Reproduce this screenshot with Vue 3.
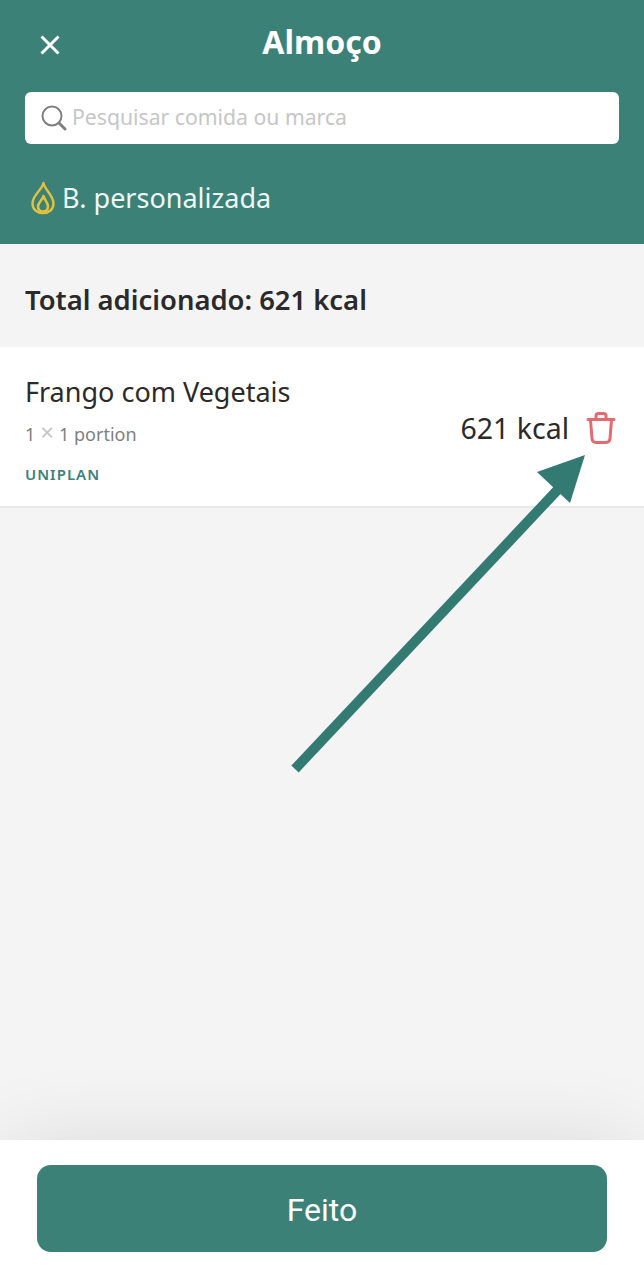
<script setup>
  const item = { name: 'Frango com Vegetais', kcal: 621, brand: 'UNIPLAN' };
</script>

<template>
  <div class="screen">
    <header class="header">
      <div class="title-row">
        <svg class="close" width="24" height="24" viewBox="0 0 24 24">
          <path d="M3.500 3.500 L20.500 20.500 M20.500 3.500 L3.500 20.500" stroke="#fff" stroke-width="3" fill="none" />
        </svg>
        <h1 class="title">Almoço</h1>
      </div>
      <div class="search">
        <svg class="search-icon" width="26" height="26" viewBox="0 0 26 26">
          <circle cx="11" cy="11" r="9.500" stroke="#808080" stroke-width="2" fill="none" />
          <path d="M18 18 L24 24" stroke="#808080" stroke-width="3" stroke-linecap="round" />
        </svg>
        <span class="placeholder">Pesquisar comida ou marca</span>
      </div>
      <div class="budget">
        <svg class="flame" width="24" height="34" viewBox="0 0 24 34">
          <path d="M12.500 2 C13 8 22.500 14 22.500 22.500 C22.500 28.500 18 32 12 32 C6 32 1.500 28.500 1.500 22.500 C1.500 14 11 9 12.500 2 Z" stroke="#e3c13f" stroke-width="2.400" fill="none" stroke-linejoin="round" />
          <path d="M12.500 15 C13.500 19 17 21.500 17 25.500 C17 28.500 15 30.500 12 30.500 C9 30.500 7 28.500 7 25.500 C7 21.500 11.500 19 12.500 15 Z" stroke="#e3c13f" stroke-width="2.600" fill="none" stroke-linejoin="round" />
        </svg>
        <span>B. personalizada</span>
      </div>
    </header>

    <main class="content">
      <div class="total">Total adicionado: {{ item.kcal }} kcal</div>
      <div class="food">
        <div class="food-info">
          <div class="food-name">{{ item.name }}</div>
          <div class="food-portion">
            <span>1</span>
            <span class="times">×</span>
            <span>1 portion</span>
          </div>
          <div class="food-brand">{{ item.brand }}</div>
        </div>
        <div class="food-side">
          <span class="food-kcal">{{ item.kcal }} kcal</span>
          <svg class="trash" width="30" height="32" viewBox="0 0 30 32">
            <path d="M2 7.500 H28 M10 7 V4 C10 2.500 11 1.500 12.500 1.500 H17.500 C19 1.500 20 2.500 20 4 V7 M4.500 8 L6 26.500 C6.200 29 7.500 30.500 10 30.500 H20 C22.500 30.500 23.800 29 24 26.500 L25.500 8" stroke="#e36a70" stroke-width="3" fill="none" stroke-linecap="round" stroke-linejoin="round" />
          </svg>
        </div>
      </div>
      <div class="shade"></div>
    </main>

    <footer class="footer">
      <button class="done">Feito</button>
    </footer>

    <svg class="arrow" width="644" height="1280" viewBox="0 0 644 1280">
      <path d="M295 769 L565 482" stroke="#337a73" stroke-width="10" fill="none" />
      <path d="M585 455 L537 472 L570 503 Z" fill="#337a73" />
    </svg>
  </div>
</template>

<style scoped>
  .screen {
    position: relative;
    width: 644px;
    height: 1280px;
    display: flex;
    flex-direction: column;
    overflow: hidden;
    background: #f4f4f5;
    font-family: "Noto Sans", "Open Sans", sans-serif;
    color: #2a2a2a;
  }

  .header {
    height: 244px;
    box-sizing: border-box;
    padding: 20px 25px 0;
    background: #3b8177;
    color: #fff;
    flex-shrink: 0;
  }

  .title-row {
    position: relative;
    height: 44px;
    display: flex;
    align-items: center;
    justify-content: center;
  }

  .close {
    position: absolute;
    left: 13px;
    top: 13px;
  }

  .title {
    margin: 0;
    font-size: 32px;
    font-weight: 700;
    line-height: 44px;
  }

  .search {
    margin-top: 28px;
    height: 52px;
    display: flex;
    align-items: center;
    gap: 5px;
    padding-left: 16px;
    background: #fff;
    border-radius: 6px;
  }

  .search-icon {
    flex-shrink: 0;
  }

  .placeholder {
    font-size: 21.200px;
    line-height: 50px;
    margin-bottom: 2px;
    color: #c6c6c6;
  }

  .budget {
    margin-top: 36px;
    display: flex;
    align-items: center;
    gap: 7px;
    padding-left: 6px;
    font-size: 27px;
    line-height: 36px;
    color: #eef7f5;
  }

  .content {
    flex: 1;
    display: flex;
    flex-direction: column;
  }

  .total {
    height: 103px;
    box-sizing: border-box;
    padding: 8px 0 0 25px;
    display: flex;
    align-items: center;
    font-size: 27.400px;
    font-weight: 600;
  }

  .food {
    height: 161px;
    box-sizing: border-box;
    padding: 27px 28px 0 25px;
    display: flex;
    justify-content: space-between;
    background: #fff;
    border-bottom: 2px solid #e8e8e8;
  }

  .food-name {
    font-size: 27px;
    line-height: 36px;
  }

  .food-portion {
    margin-top: 11px;
    display: flex;
    gap: 5px;
    font-size: 18px;
    line-height: 26px;
    color: #808080;
  }

  .times {
    font-size: 24px;
    line-height: 22px;
    color: #c4c4c4;
  }

  .food-brand {
    margin-top: 17px;
    font-size: 15px;
    font-weight: 600;
    letter-spacing: 1px;
    color: #3b8177;
  }

  .food-side {
    display: flex;
    align-items: center;
    gap: 17px;
    height: 108px;
  }

  .food-kcal {
    font-size: 28.500px;
  }

  .shade {
    flex: 1;
  }

  .footer {
    position: relative;
    height: 140px;
    box-sizing: border-box;
    padding: 25px 37px 0;
    background: #fff;
    box-shadow: 0 0 90px -10px rgba(0, 0, 0, 0.13);
    flex-shrink: 0;
  }

  .done {
    width: 100%;
    height: 87px;
    padding-top: 3px;
    border: none;
    border-radius: 14px;
    background: #3b8177;
    color: #fff;
    font-family: Roboto, sans-serif;
    font-size: 32px;
    font-weight: 400;
  }

  .arrow {
    position: absolute;
    left: 0;
    top: 0;
    pointer-events: none;
  }
</style>
